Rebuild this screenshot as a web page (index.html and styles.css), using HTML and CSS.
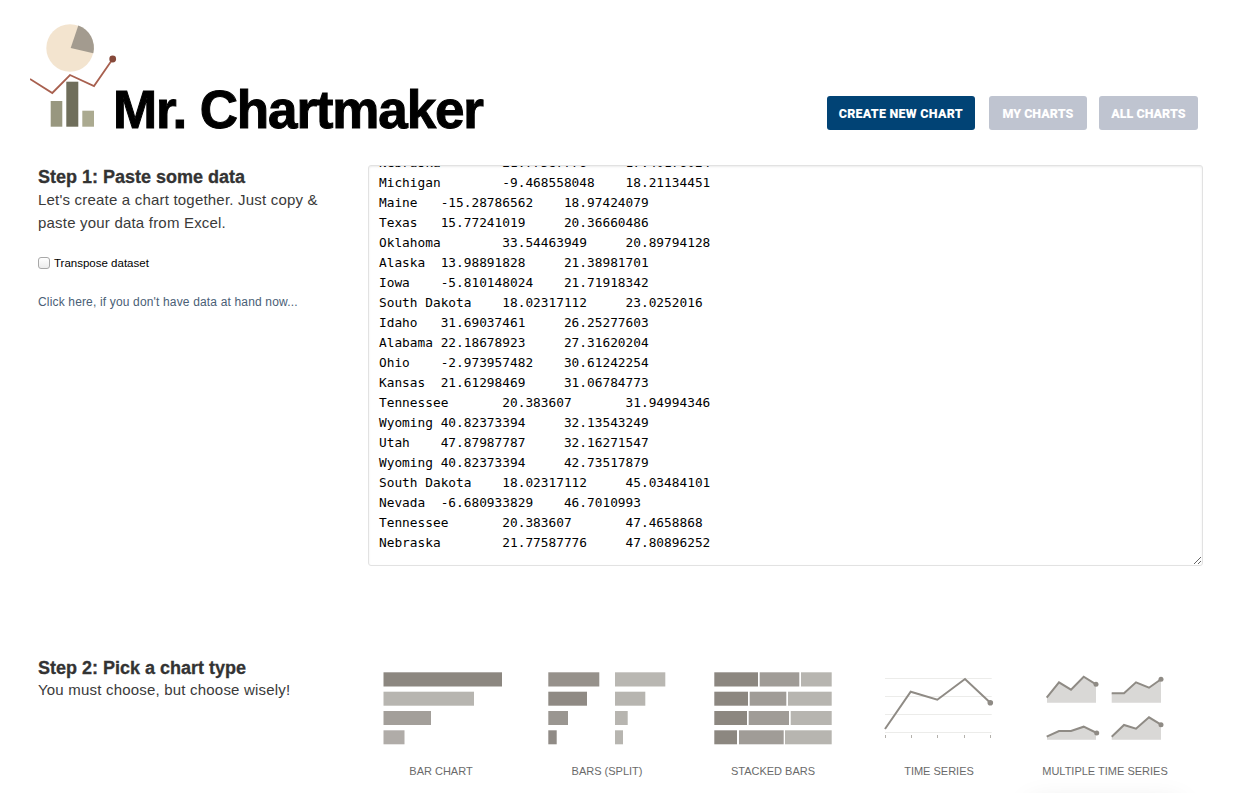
FILE: index.html
```html
<!DOCTYPE html>
<html lang="en">
<head>
<meta charset="utf-8">
<title>Mr. Chartmaker</title>
<link rel="stylesheet" href="styles.css">
</head>
<body>
<header class="top">
  <svg class="logo" viewBox="30 24 88 104" width="88" height="104" aria-hidden="true">
    <circle cx="70" cy="48" r="23.7" fill="#f3e4cf"/>
    <path d="M70.7 48 L78.3 25.5 A23.7 23.7 0 0 1 93.3 53.3 Z" fill="#a39b8f"/>
    <rect x="50.7" y="101" width="11.6" height="25.7" fill="#98977f"/>
    <rect x="66.3" y="81.7" width="12" height="45" fill="#6f6e5b"/>
    <rect x="82.3" y="110.7" width="11.7" height="16" fill="#abaa90"/>
    <polyline points="30,79 52.3,93 70,75 94,86 112.7,59" fill="none" stroke="#a8604f" stroke-width="1.8"/>
    <circle cx="112.7" cy="59" r="3.4" fill="#86493a"/>
  </svg>
  <h1 class="title">Mr. Chartmaker</h1>
  <nav class="nav">
    <a class="btn btn-primary" href="#">Create new chart</a>
    <a class="btn btn-muted btn-my" href="#">My charts</a>
    <a class="btn btn-muted" href="#">All charts</a>
  </nav>
</header>

<main class="page">
  <section class="row">
    <div class="intro">
      <h2 class="step">Step 1: Paste some data</h2>
      <p class="lead">Let's create a chart together. Just copy &amp; paste your data from Excel.</p>
      <label class="check"><input type="checkbox"> Transpose dataset</label>
      <a class="sample" href="#">Click here, if you don't have data at hand now...</a>
    </div>
    <textarea id="data" class="data" spellcheck="false">Arizona	-11.20438817	12.44190355
Nebraska	21.77587776	17.40176024
Michigan	-9.468558048	18.21134451
Maine	-15.28786562	18.97424079
Texas	15.77241019	20.36660486
Oklahoma	33.54463949	20.89794128
Alaska	13.98891828	21.38981701
Iowa	-5.810148024	21.71918342
South Dakota	18.02317112	23.0252016
Idaho	31.69037461	26.25277603
Alabama	22.18678923	27.31620204
Ohio	-2.973957482	30.61242254
Kansas	21.61298469	31.06784773
Tennessee	20.383607	31.94994346
Wyoming	40.82373394	32.13543249
Utah	47.87987787	32.16271547
Wyoming	40.82373394	42.73517879
South Dakota	18.02317112	45.03484101
Nevada	-6.680933829	46.7010993
Tennessee	20.383607	47.4658868
Nebraska	21.77587776	47.80896252</textarea>
  </section>

  <section class="row row-types">
    <div class="intro">
      <h2 class="step">Step 2: Pick a chart type</h2>
      <p class="lead lead-short">You must choose, but choose wisely!</p>
    </div>
    <ul class="types">
      <li class="type">
        <svg class="type-icon" viewBox="376 668 130 80" aria-hidden="true">
          <rect x="383.5" y="672.3" width="118.5" height="14.2" fill="#8c8780"/>
          <rect x="383.5" y="691.7" width="90.5" height="14" fill="#b7b5b0"/>
          <rect x="383.5" y="711" width="47.5" height="14" fill="#a39f9a"/>
          <rect x="383.5" y="730.3" width="21" height="14" fill="#b0aca8"/>
        </svg>
        <span class="type-name">Bar chart</span>
      </li>
      <li class="type">
        <svg class="type-icon" viewBox="542 668 130 80" aria-hidden="true">
          <rect x="548.3" y="672.3" width="51" height="14.2" fill="#96918b"/>
          <rect x="548.3" y="691.7" width="38.7" height="14" fill="#8f8a84"/>
          <rect x="548.3" y="711" width="19.7" height="14" fill="#9a9691"/>
          <rect x="548.3" y="730.3" width="8.4" height="14" fill="#908b86"/>
          <rect x="615" y="672.3" width="50.3" height="14.2" fill="#b9b7b2"/>
          <rect x="615" y="691.7" width="30.3" height="14" fill="#b7b5b0"/>
          <rect x="615" y="711" width="12.7" height="14" fill="#b7b5b0"/>
          <rect x="615" y="730.3" width="8" height="14" fill="#b7b5b0"/>
        </svg>
        <span class="type-name">Bars (split)</span>
      </li>
      <li class="type">
        <svg class="type-icon" viewBox="708 668 130 80" aria-hidden="true">
          <rect x="714.3" y="672.3" width="43.7" height="14.2" fill="#8c8780"/>
          <rect x="759.7" y="672.3" width="39.6" height="14.2" fill="#a09c97"/>
          <rect x="801" y="672.3" width="30.7" height="14.2" fill="#b7b5b0"/>
          <rect x="714.3" y="691.7" width="33.7" height="14" fill="#8c8780"/>
          <rect x="749.7" y="691.7" width="36.6" height="14" fill="#a09c97"/>
          <rect x="788" y="691.7" width="43.7" height="14" fill="#b7b5b0"/>
          <rect x="714.3" y="711" width="32.7" height="14" fill="#8c8780"/>
          <rect x="748.7" y="711" width="40.3" height="14" fill="#a09c97"/>
          <rect x="790.7" y="711" width="41" height="14" fill="#b7b5b0"/>
          <rect x="714.3" y="730.3" width="22.7" height="14" fill="#8c8780"/>
          <rect x="739" y="730.3" width="44.7" height="14" fill="#a09c97"/>
          <rect x="785" y="730.3" width="46.7" height="14" fill="#b7b5b0"/>
        </svg>
        <span class="type-name">Stacked bars</span>
      </li>
      <li class="type">
        <svg class="type-icon" viewBox="874 668 130 80" aria-hidden="true">
          <path d="M885 678.5H991.7M885 696.5H991.7M885 714.5H991.7M885 732.5H991.7" stroke="#ececea" stroke-width="1" fill="none"/>
          <path d="M885.5 735v3M911.5 735v3M937.5 735v3M964.5 735v3M990.5 735v3" stroke="#b4b1ac" stroke-width="1" fill="none"/>
          <polyline points="885,729 910.7,691.7 937.3,699.7 965,679 990.3,702.7" fill="none" stroke="#8f8b85" stroke-width="2"/>
          <circle cx="990.3" cy="702.7" r="2.8" fill="#8f8b85"/>
        </svg>
        <span class="type-name">Time series</span>
      </li>
      <li class="type">
        <svg class="type-icon" viewBox="1040 668 130 80" aria-hidden="true">
          <path d="M1047 697 L1059 682.3 1071 689.7 1083.7 676.7 1096 684.3 V702.7 H1047Z" fill="#d9d8d6"/>
          <path d="M1111.7 693.3 H1124 L1136 682.3 1149 687.7 1161 679.3 V702.7 H1111.7Z" fill="#d9d8d6"/>
          <path d="M1047 736.5 L1059 731 H1071 L1083.7 726.7 1096 733 V739.7 H1047Z" fill="#d9d8d6"/>
          <path d="M1111.7 736.7 L1124 725 1136 728.7 1149 717.3 1161 724.7 V739.7 H1111.7Z" fill="#d9d8d6"/>
          <g fill="none" stroke="#8f8b85" stroke-width="2">
            <polyline points="1046.7,697.7 1059,682.3 1071,689.7 1083.7,676.7 1096,684.3"/>
            <polyline points="1111.7,693.3 1124,693.3 1136,682.3 1149,687.7 1161,679.3"/>
            <polyline points="1046.7,736.7 1059,731 1071,731 1083.7,726.7 1096.7,733"/>
            <polyline points="1111.7,736.7 1124,725 1136,728.7 1149,717.3 1161,724.7"/>
          </g>
          <g fill="#8f8b85">
            <circle cx="1096" cy="684.3" r="2.5"/>
            <circle cx="1161" cy="679.3" r="2.5"/>
            <circle cx="1096.7" cy="733" r="2.5"/>
            <circle cx="1161" cy="724.7" r="2.5"/>
          </g>
        </svg>
        <span class="type-name">Multiple time series</span>
      </li>
    </ul>
  </section>
</main>
<div class="edge-shadow"></div>
<script src="script.js"></script>
</body>
</html>
```

FILE: styles.css
```css
* { box-sizing: border-box; }

html, body { margin: 0; padding: 0; }

body {
  background: #fff;
  color: #333;
  font-family: "Liberation Sans", Arial, sans-serif;
  overflow: hidden;
  height: 793px;
}

.top {
  display: flex;
  align-items: flex-end;
  height: 165px;
  padding: 24px 39px 35px 30px;
}

.logo {
  display: block;
  flex: none;
  width: 88px;
  height: 104px;
  margin-bottom: 2px;
}

.title {
  margin: 0 0 -10px -5px;
  color: #000;
  font-size: 53px;
  line-height: 60px;
  font-weight: 700;
  letter-spacing: -1.15px;
  white-space: nowrap;
  -webkit-text-stroke: 1px #000;
}

.nav {
  display: flex;
  gap: 14px;
  margin-left: auto;
}

.btn {
  display: block;
  height: 34px;
  padding: 0 12.5px;
  border-radius: 3px;
  color: #fff;
  font-family: Roboto, "Liberation Sans", sans-serif;
  font-size: 12.5px;
  font-weight: 900;
  line-height: 35px;
  text-transform: uppercase;
  text-decoration: none;
  white-space: nowrap;
}

.btn-primary {
  padding: 0 12px;
  background: #014375;
  letter-spacing: 0.25px;
}

.btn-muted { background: #bfc4d0; }
.btn-my { margin-right: -2px; padding: 0 13.5px; }

.page { padding: 0 34px 0 38px; }

.row {
  display: grid;
  grid-template-columns: 330px 835px;
}

.row-types { margin-top: 90px; }

.step {
  margin: 0;
  padding-top: 1px;
  color: #333;
  font-size: 18px;
  line-height: 23px;
  font-weight: 700;
  -webkit-text-stroke: 0.3px #333;
}

.lead {
  margin: -1px 0 0;
  width: 290px;
  font-size: 15px;
  line-height: 23px;
  letter-spacing: 0.2px;
  color: #3a3a3a;
}

.lead-short { margin-top: -2px; }

.check {
  display: flex;
  align-items: center;
  gap: 4px;
  margin-top: 20px;
  height: 18px;
  color: #000;
  font-size: 11.5px;
}

.check input {
  appearance: none;
  width: 12px;
  height: 12px;
  margin: 0;
  border: 1px solid #a8a8a8;
  border-radius: 3px;
  background: linear-gradient(#fff, #ececec);
}

.sample {
  display: block;
  margin-top: 21px;
  color: #4a6076;
  font-size: 12px;
  line-height: 18px;
  letter-spacing: 0.16px;
  text-decoration: none;
}

.data {
  display: block;
  width: 835px;
  height: 401px;
  padding: 8px 10px 12px;
  border: 1px solid #e2e2e2;
  border-radius: 3px;
  box-shadow: inset 0 1px 2px rgba(0, 0, 0, 0.08);
  color: #000;
  font-family: "DejaVu Sans Mono", monospace;
  font-size: 12.8px;
  line-height: 20px;
  tab-size: 8;
  white-space: pre;
  overflow: auto;
  scrollbar-width: none;
  outline: none;
}

.types {
  display: grid;
  grid-template-columns: repeat(5, 166px);
  margin: 0 0 0 -10px;
  padding: 12px 0 0;
  list-style: none;
}

.type {
  display: flex;
  flex-direction: column;
  align-items: center;
}

.type-icon {
  display: block;
  width: 130px;
  height: 80px;
}

.type-name {
  margin-top: 15px;
  color: #6a6a6a;
  font-size: 11px;
  line-height: 16px;
  text-transform: uppercase;
  white-space: nowrap;
}

.edge-shadow {
  position: fixed;
  left: 1030px;
  top: 805px;
  width: 150px;
  height: 30px;
  box-shadow: 0 0 30px rgba(0, 0, 0, 0.12);
}
```

FILE: script.js
```js
var data = document.getElementById('data');
data.scrollTop = data.scrollHeight;
```
